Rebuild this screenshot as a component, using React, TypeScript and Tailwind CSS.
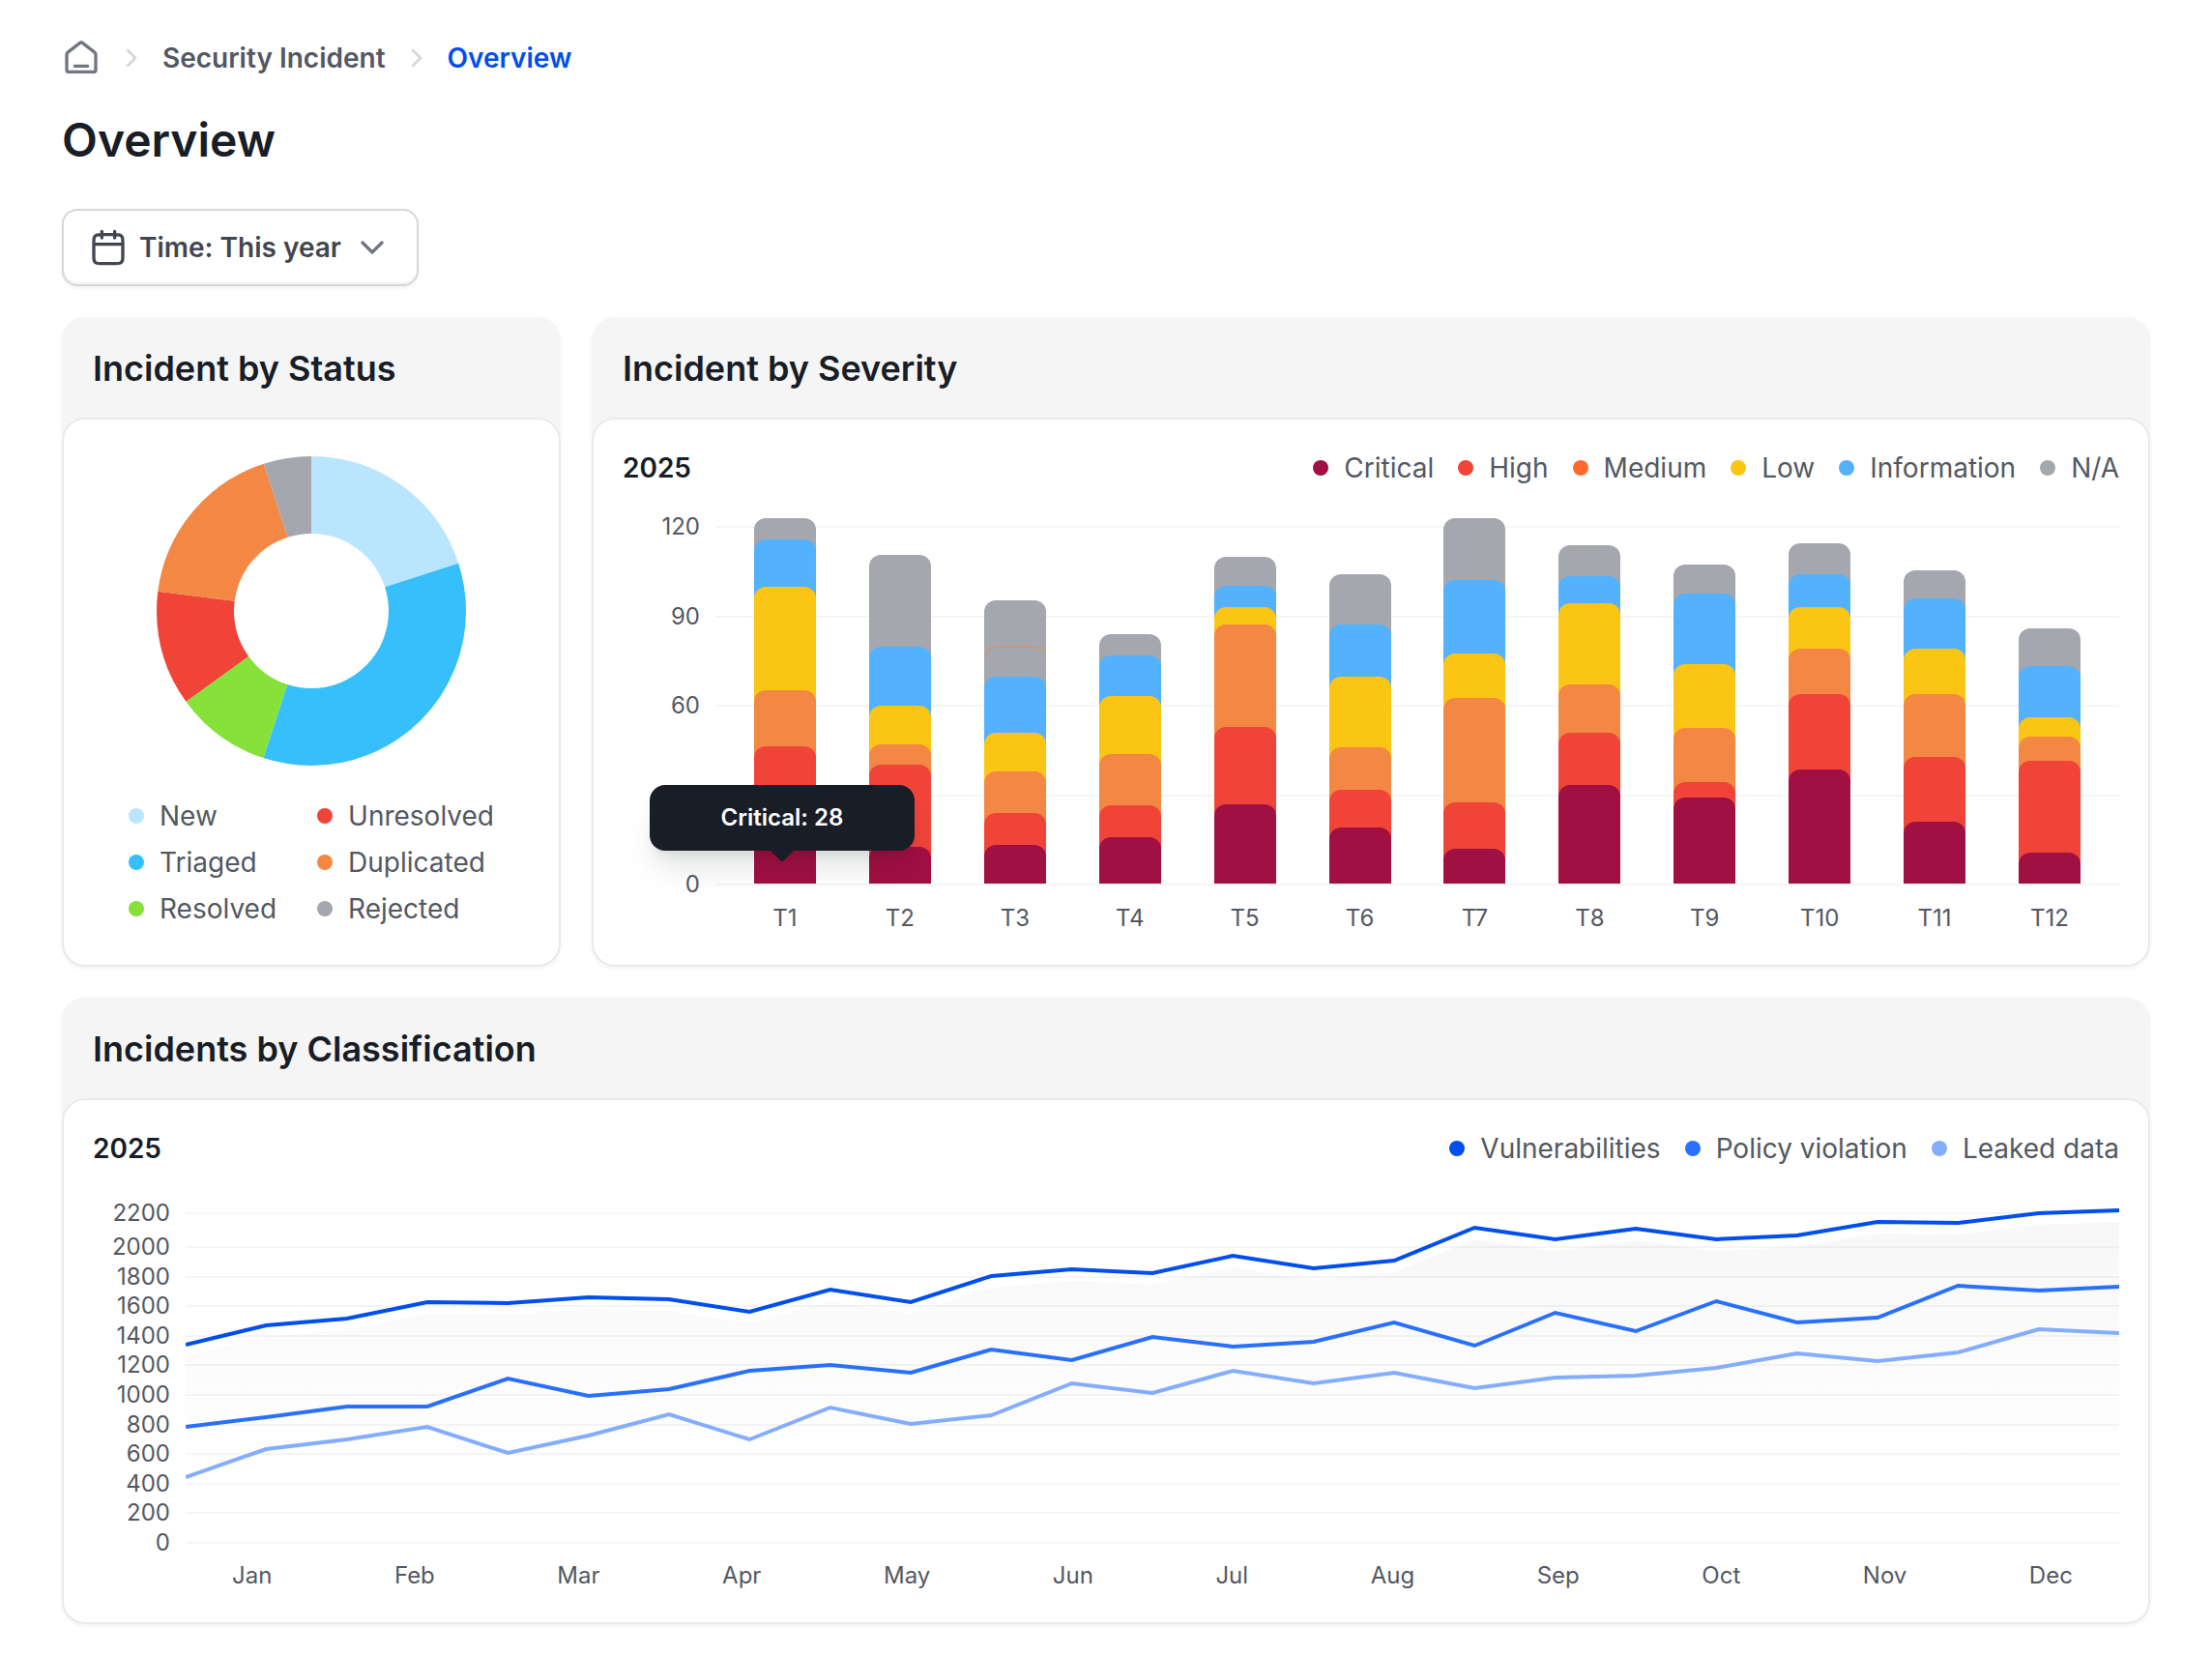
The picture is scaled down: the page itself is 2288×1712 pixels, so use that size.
import React from 'react';

interface LegendEntry {
  label: string;
  dot: string;
}

interface BarLayer {
  color: string;
  height: number;
}

interface Bar {
  label: string;
  layers: BarLayer[];
}

const CRITICAL = '#a11043';
const HIGH = '#f04438';
const MEDIUM = '#f38744';
const LOW = '#fac515';
const INFO = '#53b1fd';
const NA = '#a4a7ae';

const stack = (na: number, info: number, low: number, medium: number, high: number, critical: number): BarLayer[] => [
  { color: NA, height: na },
  { color: INFO, height: info },
  { color: LOW, height: low },
  { color: MEDIUM, height: medium },
  { color: HIGH, height: high },
  { color: CRITICAL, height: critical },
];

const bars: Bar[] = [
  { label: 'T1', layers: stack(378, 356, 307, 200, 142, 86) },
  { label: 'T2', layers: stack(340, 245, 184, 144, 123, 38) },
  {
    label: 'T3',
    layers: [{ color: NA, height: 293 }, { color: MEDIUM, height: 245 }, ...stack(244, 214, 156, 116, 73, 40)],
  },
  { label: 'T4', layers: stack(258, 236, 194, 134, 81, 48) },
  { label: 'T5', layers: stack(338, 308, 286, 268, 162, 82) },
  { label: 'T6', layers: stack(320, 268, 214, 141, 97, 58) },
  { label: 'T7', layers: stack(378, 314, 238, 192, 84, 36) },
  { label: 'T8', layers: stack(350, 318, 290, 206, 156, 102) },
  { label: 'T9', layers: stack(330, 300, 227, 161, 105, 89) },
  { label: 'T10', layers: stack(352, 320, 286, 243, 196, 118) },
  { label: 'T11', layers: stack(324, 295, 243, 196, 131, 64) },
  { label: 'T12', layers: stack(264, 225, 172, 152, 127, 32) },
];

const statusSlices = [
  { share: 20, color: '#b9e6fe' },
  { share: 35, color: '#36bffa' },
  { share: 10, color: '#86e13a' },
  { share: 12, color: '#f04438' },
  { share: 18, color: '#f38744' },
  { share: 5, color: '#a4a7ae' },
];

const statusLegend: LegendEntry[] = [
  { label: 'New', dot: 'bg-[#b9e6fe]' },
  { label: 'Triaged', dot: 'bg-[#36bffa]' },
  { label: 'Resolved', dot: 'bg-[#86e13a]' },
  { label: 'Unresolved', dot: 'bg-[#f04438]' },
  { label: 'Duplicated', dot: 'bg-[#f38744]' },
  { label: 'Rejected', dot: 'bg-[#a4a7ae]' },
];

const severityLegend: LegendEntry[] = [
  { label: 'Critical', dot: 'bg-[#a11043]' },
  { label: 'High', dot: 'bg-[#f04438]' },
  { label: 'Medium', dot: 'bg-[#ff692e]' },
  { label: 'Low', dot: 'bg-[#fac515]' },
  { label: 'Information', dot: 'bg-[#53b1fd]' },
  { label: 'N/A', dot: 'bg-[#a4a7ae]' },
];

const classificationLegend: LegendEntry[] = [
  { label: 'Vulnerabilities', dot: 'bg-[#004eeb]' },
  { label: 'Policy violation', dot: 'bg-[#2970ff]' },
  { label: 'Leaked data', dot: 'bg-[#84adff]' },
];

const months = ['Jan', 'Feb', 'Mar', 'Apr', 'May', 'Jun', 'Jul', 'Aug', 'Sep', 'Oct', 'Nov', 'Dec'];

// y of each half-month sample inside a 371px tall plot
const vulnerabilities = [151, 131, 124, 107, 108, 102, 104, 117, 94, 107, 80, 73, 77, 59, 72, 64, 30, 42, 31, 42, 38, 24, 25, 15, 12];
const policyViolation = [236, 226, 215, 215, 186, 204, 197, 178, 172, 180, 156, 167, 143, 153, 148, 128, 152, 118, 137, 106, 128, 123, 90, 95, 91];
const leakedData = [288, 259, 249, 236, 263, 245, 223, 249, 216, 233, 224, 191, 201, 178, 191, 180, 196, 185, 183, 175, 160, 168, 159, 135, 139];

const toPoints = (values: number[], shift = 0) =>
  values.map((y, i) => `${((i * 2000) / (values.length - 1)).toFixed(1)},${y + shift}`).join(' ');

const HomeIcon = () => (
  <svg className="size-10 shrink-0" viewBox="0 0 20 20" fill="none" stroke="#717680" strokeWidth="1.67" strokeLinecap="round" strokeLinejoin="round">
    <path d="M6.67 14.17h6.66M9.18 2.3 3.53 6.7c-.38.29-.57.44-.7.62-.12.17-.21.35-.27.55-.06.22-.06.46-.06.93v7.03c0 .47 0 .7.09.88.08.16.21.29.37.37.17.09.41.09.87.09h12.34c.46 0 .7 0 .87-.09.16-.08.29-.21.37-.37.09-.18.09-.41.09-.88V8.8c0-.47 0-.71-.06-.93a1.67 1.67 0 0 0-.27-.55c-.13-.18-.32-.33-.7-.62l-5.65-4.4c-.29-.22-.44-.34-.6-.38a.83.83 0 0 0-.44 0c-.16.04-.31.16-.6.38Z" />
  </svg>
);

const CrumbChevron = () => (
  <svg className="size-8 shrink-0" viewBox="0 0 16 16" fill="none" stroke="#d5d7da" strokeWidth="1.33" strokeLinecap="round" strokeLinejoin="round">
    <path d="m6 12 4-4-4-4" />
  </svg>
);

const CalendarIcon = () => (
  <svg className="size-10 shrink-0" viewBox="0 0 20 20" fill="none" stroke="#414651" strokeWidth="1.67" strokeLinecap="round" strokeLinejoin="round">
    <path d="M17.5 8.33h-15M13.33 1.67V5M6.67 1.67V5M6.5 18.33h7c1.4 0 2.1 0 2.64-.27.47-.24.85-.62 1.09-1.09.27-.54.27-1.24.27-2.64v-7c0-1.4 0-2.1-.27-2.63a2.5 2.5 0 0 0-1.1-1.1c-.53-.27-1.23-.27-2.63-.27h-7c-1.4 0-2.1 0-2.63.27-.48.24-.86.63-1.1 1.1-.27.53-.27 1.23-.27 2.63v7c0 1.4 0 2.1.27 2.64.24.47.62.85 1.1 1.09.53.27 1.23.27 2.63.27Z" />
  </svg>
);

const DropdownChevron = () => (
  <svg className="size-10 shrink-0" viewBox="0 0 20 20" fill="none" stroke="#717680" strokeWidth="1.67" strokeLinecap="round" strokeLinejoin="round">
    <path d="m5 7.5 5 5 5-5" />
  </svg>
);

const LegendItem: React.FC<{ entry: LegendEntry }> = ({ entry }) => (
  <li className="flex items-center gap-4">
    <span className={`size-4 rounded-full ${entry.dot}`} />
    {entry.label}
  </li>
);

const Card: React.FC<{ title: string; className?: string; children: React.ReactNode }> = ({ title, className = '', children }) => (
  <section className="flex flex-col rounded-3xl bg-[#f5f5f5] shadow-[0_2px_4px_rgba(10,13,18,0.05)]">
    <h2 className="px-8 pt-6 pb-[22px] text-[36px] leading-[58px] font-semibold text-[#181d27]">{title}</h2>
    <div className={`flex-1 rounded-3xl border-2 border-[#e9eaeb] bg-white ${className}`}>{children}</div>
  </section>
);

const ChartHeader: React.FC<{ year: string; legend: LegendEntry[] }> = ({ year, legend }) => (
  <div className="flex items-center justify-between text-[28px] leading-10">
    <h3 className="font-semibold text-[#181d27]">{year}</h3>
    <ul className="flex gap-[25px]">
      {legend.map((entry) => (
        <LegendItem key={entry.label} entry={entry} />
      ))}
    </ul>
  </div>
);

const AxisRow: React.FC<{ value: number; className: string }> = ({ value, className }) => (
  <div className={`flex items-center gap-4 ${className}`}>
    <span className="w-20 text-right">{value}</span>
    <span className="h-0.5 flex-1 bg-[#f5f5f5]" />
  </div>
);

const Donut = () => {
  const radius = 120;
  const length = 2 * Math.PI * radius;
  let start = 0;

  return (
    <svg className="size-80" viewBox="0 0 320 320" role="img" aria-label="Incidents by status">
      <g transform="rotate(-90 160 160)" fill="none" strokeWidth="80">
        {statusSlices.map((slice) => {
          const offset = start;
          start += slice.share;
          return (
            <circle
              key={slice.color}
              cx="160"
              cy="160"
              r={radius}
              stroke={slice.color}
              strokeDasharray={`${(slice.share / 100) * length} ${length}`}
              strokeDashoffset={(-offset / 100) * length}
            />
          );
        })}
      </g>
    </svg>
  );
};

const Tooltip = () => (
  <div className="absolute bottom-[34px] -left-27 z-10 flex h-17 w-[274px] items-center justify-center rounded-2xl bg-[#181d27] text-[24px] font-semibold text-white shadow-[0_24px_32px_-8px_rgba(10,13,18,0.12),0_8px_12px_-4px_rgba(10,13,18,0.08)]">
    Critical: 28
    <svg className="absolute top-full left-1/2 h-3 w-6 -translate-x-1/2" viewBox="0 0 24 12" fill="#181d27">
      <path d="M0 0h24L13.4 10.6a2 2 0 0 1-2.8 0Z" />
    </svg>
  </div>
);

const SeverityChart = () => (
  <>
    <div className="mt-6 grid h-[404px] text-[24px] leading-[34px]">
      <div className="col-start-1 row-start-1 flex flex-col justify-between">
        {[120, 90, 60, 30, 0].map((value) => (
          <AxisRow key={value} value={value} className="h-[34px]" />
        ))}
      </div>
      <div className="col-start-1 row-start-1 flex items-end justify-between pr-10 pb-[18px] pl-34">
        {bars.map((bar) => (
          <div key={bar.label} className="relative grid w-16 items-end">
            {bar.layers.map((layer, i) => (
              <div
                key={i}
                className="col-start-1 row-start-1 rounded-t-xl"
                style={{ height: layer.height, backgroundColor: layer.color }}
              />
            ))}
            {bar.label === 'T1' && <Tooltip />}
          </div>
        ))}
      </div>
    </div>
    <div className="flex justify-between pr-10 pl-34 text-[24px] leading-9">
      {bars.map((bar) => (
        <span key={bar.label} className="w-16 text-center">
          {bar.label}
        </span>
      ))}
    </div>
  </>
);

const ClassificationChart = () => (
  <>
    <div className="mt-8 grid text-[24px] leading-[30px]">
      <div className="col-start-1 row-start-1">
        <AxisRow value={2200} className="mb-[5px] h-[30px]" />
        <div className="flex h-[336px] flex-col justify-between">
          {[2000, 1800, 1600, 1400, 1200, 1000, 800, 600, 400, 200, 0].map((value) => (
            <AxisRow key={value} value={value} className="h-[30px]" />
          ))}
        </div>
      </div>
      <div className="col-start-1 row-start-1 pl-24">
        <svg className="h-[371px] w-full" viewBox="0 0 2000 371" preserveAspectRatio="none" fill="none" role="img" aria-label="Incidents by classification">
          <defs>
            <linearGradient id="area" x1="0" y1="0" x2="0" y2="1">
              <stop offset="0" stopColor="#000" stopOpacity="0.03" />
              <stop offset="0.8" stopColor="#000" stopOpacity="0" />
            </linearGradient>
          </defs>
          <polygon points={`${toPoints(vulnerabilities, 12)} 2000,356 0,356`} fill="url(#area)" />
          <g strokeWidth="4">
            <polyline points={toPoints(leakedData)} stroke="#84adff" />
            <polyline points={toPoints(policyViolation)} stroke="#2970ff" />
            <polyline points={toPoints(vulnerabilities)} stroke="#004eeb" />
          </g>
        </svg>
      </div>
    </div>
    <div className="mt-px flex justify-between pr-12 pl-36 text-[24px] leading-9">
      {months.map((month) => (
        <span key={month}>{month}</span>
      ))}
    </div>
  </>
);

export default function App() {
  return (
    <main className="min-h-screen bg-white px-16 pt-10 pb-8 font-[Inter,sans-serif] text-[#535862]">
      <nav aria-label="Breadcrumb" className="flex items-center gap-4 text-[28px] leading-10 font-semibold">
        <a href="#" aria-label="Home">
          <HomeIcon />
        </a>
        <CrumbChevron />
        <a href="#">Security Incident</a>
        <CrumbChevron />
        <a href="#" aria-current="page" className="text-[#004eeb]">
          Overview
        </a>
      </nav>

      <h1 className="mt-8 text-[48px] leading-[66px] font-semibold text-[#181d27]">Overview</h1>

      {/* Filter */}
      <label className="mt-[38px] flex h-20 w-fit items-center gap-3 rounded-2xl border-2 border-[#d5d7da] bg-white px-[26px] shadow-[inset_0_-2px_0_rgba(10,13,18,0.05),0_2px_4px_rgba(10,13,18,0.05)]">
        <CalendarIcon />
        <select
          aria-label="Time range"
          defaultValue="year"
          className="[field-sizing:content] appearance-none bg-transparent text-[28px] leading-10 font-semibold text-[#414651] outline-none"
        >
          <option value="year">Time: This year</option>
          <option value="month">Time: This month</option>
          <option value="week">Time: This week</option>
        </select>
        <DropdownChevron />
      </label>

      <div className="mt-8 grid grid-cols-[516px_minmax(0,1fr)] gap-8">
        <Card title="Incident by Status" className="flex flex-col items-center gap-8 pt-[38px] pb-[38px]">
          <Donut />
          <ul className="grid grid-flow-col grid-rows-3 gap-x-[42px] gap-y-2 text-[28px] leading-10">
            {statusLegend.map((entry) => (
              <LegendItem key={entry.label} entry={entry} />
            ))}
          </ul>
        </Card>

        <Card title="Incident by Severity" className="p-[30px]">
          <ChartHeader year="2025" legend={severityLegend} />
          <SeverityChart />
        </Card>

        <div className="col-span-2">
          <Card title="Incidents by Classification" className="p-[30px]">
            <ChartHeader year="2025" legend={classificationLegend} />
            <ClassificationChart />
          </Card>
        </div>
      </div>
    </main>
  );
}
